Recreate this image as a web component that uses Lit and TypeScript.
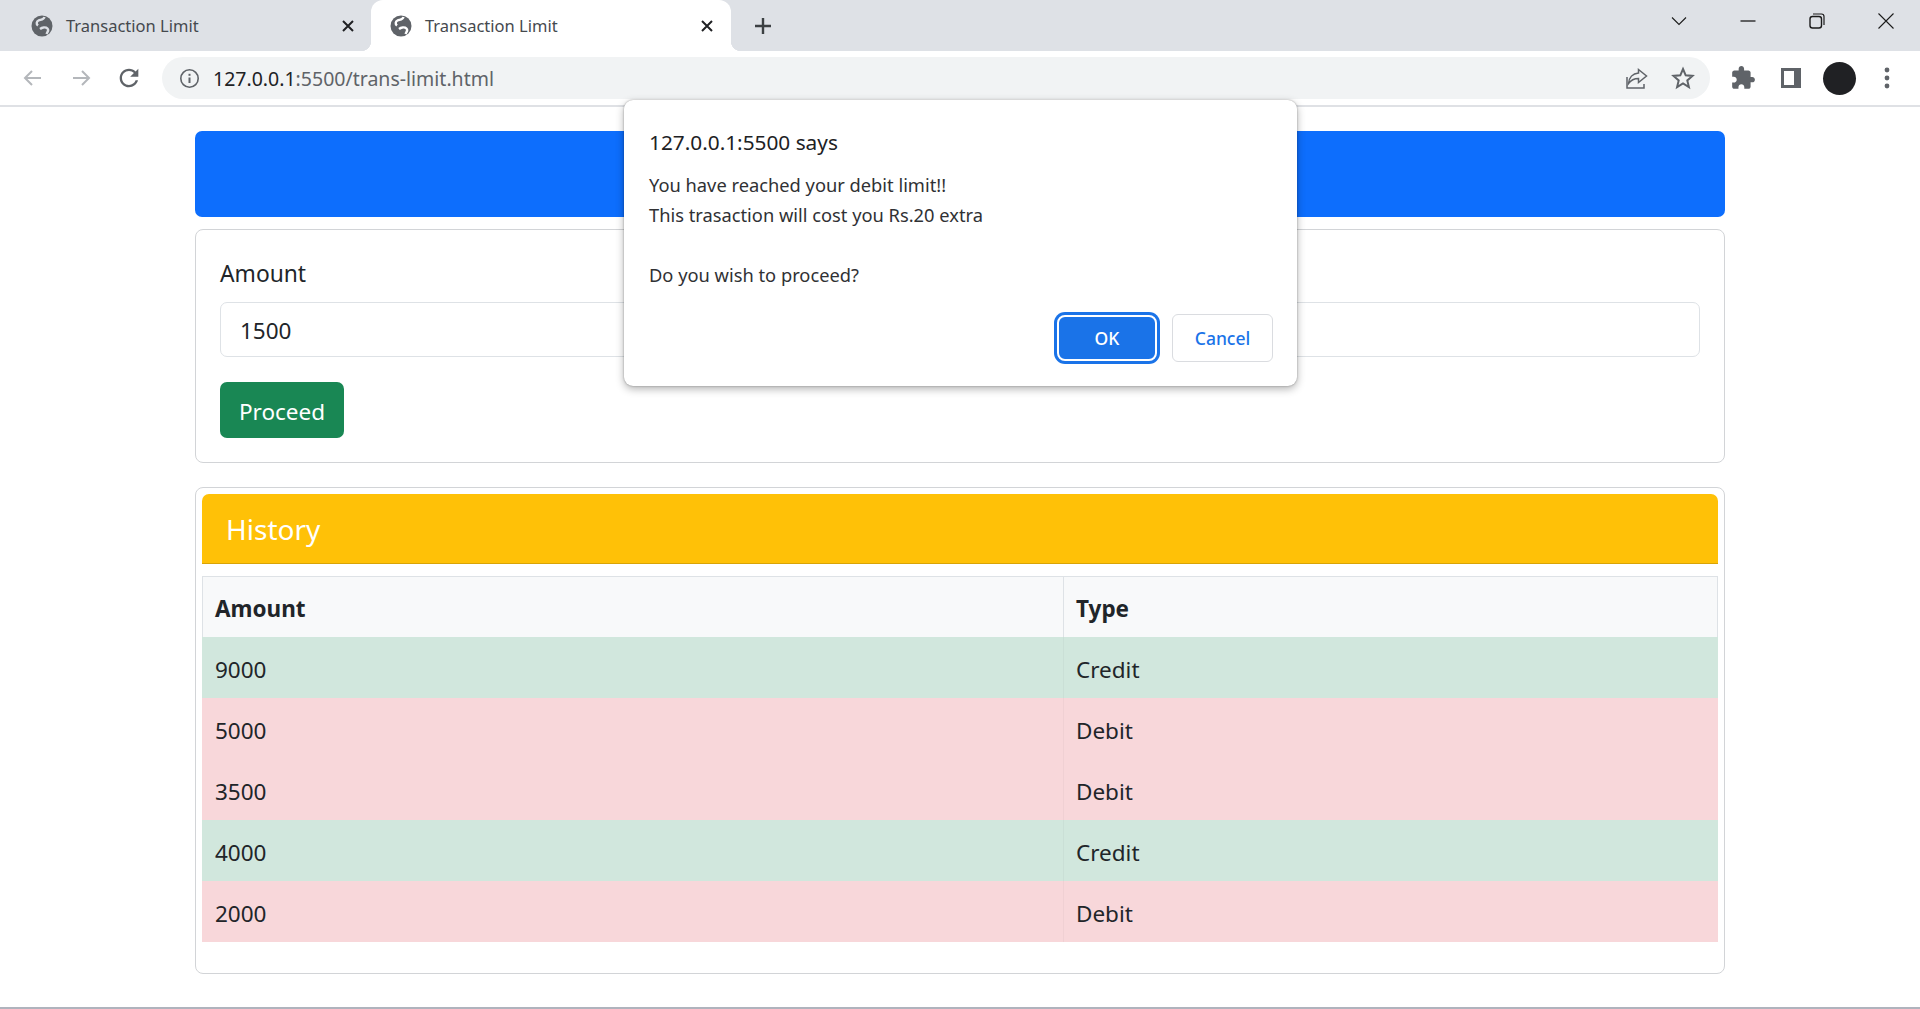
import { LitElement, html, css, svg } from 'lit';
import { customElement } from 'lit/decorators.js';
import { classMap } from 'lit/directives/class-map.js';

const HISTORY = [
  { amount: '9000', type: 'Credit' },
  { amount: '5000', type: 'Debit' },
  { amount: '3500', type: 'Debit' },
  { amount: '4000', type: 'Credit' },
  { amount: '2000', type: 'Debit' },
];

// favicon placeholder: solid disc with two land strokes in the tab's own colour
const globe = svg`
  <circle cx="12" cy="12" r="10.500" fill="#5f6368" />
  <path class="land" d="M14.500 3c-.8 3-4 2.500-6 3.500S6 10 8 11.500" />
  <path class="land" d="M10 15c2-1.500 5.500-2.500 7.500-.5s-.5 4-1 5.500" />`;

@customElement('app-root')
export class AppRoot extends LitElement {
  static styles = css`
    :host {
      display: flex;
      flex-direction: column;
      position: relative;
      height: 1009px;
      overflow: hidden;
      background: #fff;
      font-family: "Noto Sans", "Open Sans", sans-serif;
      color: #212529;
    }
    svg { display: block; flex: none; }

    .strip {
      display: flex;
      flex: none;
      height: 51px;
      padding-left: 12px;
      background: #dee1e6;
    }
    .tab {
      position: relative;
      display: flex;
      align-items: center;
      width: 359px;
      padding: 0 12px 0 18px;
      box-sizing: border-box;
      border-radius: 12px 12px 0 0;
      font-size: 16.5px;
      color: #45494e;
    }
    .tab.active { width: 360px; background: #fff; }
    .tab.active::before,
    .tab.active::after {
      content: "";
      position: absolute;
      bottom: 0;
      width: 10px;
      height: 10px;
    }
    .tab.active::before { left: -10px; background: radial-gradient(circle at 0 0, #dee1e6 10px, #fff 10.5px); }
    .tab.active::after { right: -10px; background: radial-gradient(circle at 100% 0, #dee1e6 10px, #fff 10.5px); }
    .tab svg.fav { width: 24px; height: 24px; margin-right: 12px; margin-top: 1px; }
    .land { fill: none; stroke: #dee1e6; stroke-width: 2.4; }
    .tab.active .land { stroke: #fff; }
    .tab .title { flex: 1; }
    .tab svg.x { width: 14px; height: 14px; stroke: #202124; stroke-width: 2; margin-right: 4px; }
    .tab.active svg.x { margin-right: 5px; }
    .plus { display: flex; align-items: center; margin-left: 23px; }
    .plus svg { width: 18px; height: 18px; stroke: #3c4043; stroke-width: 2.4; }
    .spacer { flex: 1; }
    .win { display: flex; height: 42px; }
    .win div { display: flex; align-items: center; justify-content: center; width: 69px; }
    .win svg { width: 18px; height: 18px; stroke: #1b1b1b; stroke-width: 1.1; fill: none; }

    .toolbar {
      display: flex;
      flex: none;
      align-items: center;
      height: 56px;
      padding-left: 9px;
      box-sizing: border-box;
      border-bottom: 2px solid #dfe1e5;
    }
    .nav { width: 48px; display: flex; justify-content: center; }
    .nav svg { width: 24px; height: 24px; fill: none; stroke: #b4b7bb; stroke-width: 2; }
    .nav.reload svg { fill: #5f6368; stroke: none; width: 28px; height: 28px; }
    .omni {
      display: flex;
      align-items: center;
      width: 1548px;
      height: 42px;
      margin-left: 9px;
      padding-left: 18px;
      box-sizing: border-box;
      border-radius: 21px;
      background: #f1f3f4;
      font-size: 19.5px;
      color: #5f6368;
    }
    .omni svg.info { width: 21px; height: 21px; fill: none; stroke: #5f6368; stroke-width: 1.6; margin-right: 13px; margin-left: -1px; }
    .omni .host { color: #202124; }
    .omni .grow { flex: 1; }
    .omni svg.share { width: 26px; height: 26px; fill: none; stroke: #5f6368; stroke-width: 1.5; margin-right: 22px; }
    .omni svg.star { width: 24px; height: 24px; fill: none; stroke: #5f6368; stroke-width: 2; margin-right: 15px; }
    .ext { display: flex; align-items: center; margin-left: 20px; }
    .ext svg.puzzle { width: 26px; height: 26px; fill: #5f6368; }
    .ext svg.panel { width: 24px; height: 24px; margin-left: 23px; }
    .avatar { width: 33px; height: 33px; margin-left: 20px; border-radius: 50%; background: #202124; }
    .ext svg.dots { width: 6px; height: 22px; margin-left: 28px; fill: #5f6368; }

    main {
      flex: 1;
      min-height: 0;
      display: flex;
      flex-direction: column;
      padding: 24px 195px 0;
    }
    .banner {
      flex: none;
      height: 86px;
      border-radius: 7px;
      background: #0d6efd;
      margin-bottom: 12px;
    }
    .card {
      flex: none;
      box-sizing: border-box;
      border: 1px solid #d2d4d7;
      border-radius: 8px;
    }
    .form { height: 234px; padding: 26px 24px 0; margin-bottom: 24px; }
    .form label { display: block; font-size: 22.8px; line-height: 36px; margin-bottom: 10px; }
    .amount {
      height: 55px;
      padding-left: 19px;
      box-sizing: border-box;
      border: 1px solid #dee2e6;
      border-radius: 7px;
      margin-bottom: 25px;
      font-size: 22.5px;
      line-height: 55px;
    }
    .proceed {
      display: block;
      width: 124px;
      height: 56px;
      padding: 2px 0 0;
      border: none;
      border-radius: 7px;
      background: #198754;
      color: #fff;
      font: inherit;
      font-size: 22.5px;
    }
    .history { height: 487px; padding: 6px; }
    .history h2 {
      height: 70px;
      box-sizing: border-box;
      margin: 0 0 12px;
      padding-left: 24px;
      border-bottom: 1px solid #d9a406;
      border-radius: 7px 7px 0 0;
      background: #ffc107;
      color: #fff;
      font-size: 28px;
      font-weight: 400;
      line-height: 70px;
    }
    table { width: 100%; table-layout: fixed; border-collapse: separate; border-spacing: 0; font-size: 22.5px; }
    th, td { height: 61px; padding: 2px 12px 0; box-sizing: border-box; text-align: left; }
    td { padding-top: 3px; }
    td:first-child { padding-left: 13px; }
    th { background: #f8f9fa; border: solid #dee2e6; border-width: 1px 0 0 1px; font-weight: 700; }
    th:last-child { border-right: 1px solid #dee2e6; }
    th:first-child { width: 861px; }
    td + td { border-left: 1px solid rgba(0, 0, 0, 0.03); }
    tr.credit td { background: #d1e7dd; }
    tr.debit td { background: #f8d7da; }

    .bottom { flex: none; height: 2px; background: #b0b3bd; }

    .dialog {
      position: absolute;
      left: 624px;
      top: 100px;
      width: 673px;
      height: 286px;
      padding: 24px 24px 0 25px;
      box-sizing: border-box;
      border-radius: 9px;
      background: #fff;
      box-shadow: 0 0 2px rgba(0, 0, 0, 0.35), 0 3px 8px rgba(0, 0, 0, 0.3);
    }
    .dialog h1 { margin: 0 0 10px; font-size: 20.8px; font-weight: 400; line-height: 36px; color: #202124; }
    .dialog p { margin: 0; font-size: 18.3px; line-height: 30px; color: #303134; white-space: pre-line; }
    .actions { display: flex; justify-content: flex-end; align-items: center; gap: 13px; margin-top: 24px; }
    .actions button { font: inherit; font-size: 17.5px; font-weight: 500; padding: 0; background: #fff; box-sizing: border-box; }
    .ok {
      width: 100px;
      height: 46px;
      margin-right: 2px;
      border: 2px solid #fff;
      border-radius: 8px;
      background: #1a73e8 !important;
      color: #fff;
      box-shadow: 0 0 0 3px #1a73e8;
    }
    .cancel { width: 101px; height: 48px; border: 1px solid #dadce0; border-radius: 6px; color: #1a73e8; }
  `;

  private renderTab(active: boolean) {
    return html`<div class=${classMap({ tab: true, active })}>
      <svg class="fav" viewBox="0 0 24 24">${globe}</svg>
      <span class="title">Transaction Limit</span>
      <svg class="x" viewBox="0 0 14 14"><path d="M2 2l10 10M12 2L2 12" /></svg>
    </div>`;
  }

  render() {
    return html`
      <div class="strip">
        ${this.renderTab(false)} ${this.renderTab(true)}
        <div class="plus"><svg viewBox="0 0 18 18"><path d="M9 1v16M1 9h16" /></svg></div>
        <div class="spacer"></div>
        <div class="win">
          <div><svg viewBox="0 0 18 18"><path d="M2 5.5l7 7 7-7" /></svg></div>
          <div><svg viewBox="0 0 18 18"><path d="M1.5 9h15" stroke-width="1.3" /></svg></div>
          <div>
            <svg viewBox="0 0 18 18">
              <rect x="2" y="4.5" width="11.5" height="11.5" rx="2.5" stroke-width="1.4" />
              <path d="M5 2h8.5A2.5 2.5 0 0 1 16 4.500V13" stroke-width="1.2" />
            </svg>
          </div>
          <div><svg viewBox="0 0 18 18"><path d="M1.500 1.500l15 15M16.500 1.500l-15 15" /></svg></div>
        </div>
      </div>

      <div class="toolbar">
        <div class="nav"><svg viewBox="0 0 24 24"><path d="M20 12H4.500M11 5l-7 7 7 7" /></svg></div>
        <div class="nav"><svg viewBox="0 0 24 24"><path d="M4 12h15.500M13 5l7 7-7 7" /></svg></div>
        <div class="nav reload">
          <svg viewBox="0 0 24 24">
            <path d="M17.650 6.350C16.200 4.900 14.210 4 12 4c-4.420 0-7.990 3.580-7.990 8s3.570 8 7.990 8c3.730 0 6.840-2.550 7.730-6h-2.080c-.82 2.330-3.040 4-5.650 4-3.310 0-6-2.690-6-6s2.690-6 6-6c1.660 0 3.140.69 4.220 1.780L13 11h7V4l-2.350 2.350z" />
          </svg>
        </div>
        <div class="omni">
          <svg class="info" viewBox="0 0 21 21">
            <circle cx="10.500" cy="10.500" r="8.700" />
            <path d="M10.500 9.500v5.500" stroke-width="2" />
            <path d="M10.500 5.800v2" stroke-width="2" />
          </svg>
          <span><span class="host">127.0.0.1</span>:5500/trans-limit.html</span>
          <span class="grow"></span>
          <svg class="share" viewBox="0 0 26 26">
            <path d="M4 12v11h17v-4" />
            <path d="M15.500 4.500l8 6.500-8 6.500v-4c-4 0-7.500 1.500-10 5 .5-5.500 4-10 10-10.500z" />
          </svg>
          <svg class="star" viewBox="0 0 24 24">
            <path d="M12 3l2.700 6.300 6.800.6-5.200 4.500 1.600 6.700L12 17.500l-5.900 3.600 1.600-6.700-5.200-4.500 6.800-.6z" />
          </svg>
        </div>
        <div class="ext">
          <svg class="puzzle" viewBox="0 0 24 24">
            <path d="M20.500 11H19V7c0-1.100-.9-2-2-2h-4V3.500C13 2.120 11.880 1 10.500 1S8 2.120 8 3.500V5H4c-1.100 0-1.990.9-1.990 2v3.800H3.500c1.490 0 2.700 1.210 2.700 2.700s-1.210 2.700-2.700 2.700H2V20c0 1.100.9 2 2 2h3.800v-1.500c0-1.490 1.210-2.700 2.700-2.700 1.490 0 2.700 1.210 2.700 2.700V22H17c1.100 0 2-.9 2-2v-4h1.500c1.380 0 2.500-1.120 2.500-2.500S21.880 11 20.500 11z" />
          </svg>
          <svg class="panel" viewBox="0 0 24 24">
            <path fill="#5f6368" fill-rule="evenodd" d="M2 2h20v20H2zM5 5v14h10V5z" />
          </svg>
          <div class="avatar"></div>
          <svg class="dots" viewBox="0 0 6 22">
            <circle cx="3" cy="3" r="2.400" /><circle cx="3" cy="11" r="2.400" /><circle cx="3" cy="19" r="2.400" />
          </svg>
        </div>
      </div>

      <main>
        <div class="banner"></div>
        <div class="card form">
          <label>Amount</label>
          <div class="amount">1500</div>
          <button class="proceed">Proceed</button>
        </div>
        <div class="card history">
          <h2>History</h2>
          <table>
            <thead><tr><th>Amount</th><th>Type</th></tr></thead>
            <tbody>
              ${HISTORY.map(
                (row) => html`<tr class=${row.type.toLowerCase()}><td>${row.amount}</td><td>${row.type}</td></tr>`
              )}
            </tbody>
          </table>
        </div>
      </main>
      <div class="bottom"></div>

      <div class="dialog">
        <h1>127.0.0.1:5500 says</h1>
        <p>You have reached your debit limit!!
This trasaction will cost you Rs.20 extra

Do you wish to proceed?</p>
        <div class="actions">
          <button class="ok">OK</button>
          <button class="cancel">Cancel</button>
        </div>
      </div>
    `;
  }
}
